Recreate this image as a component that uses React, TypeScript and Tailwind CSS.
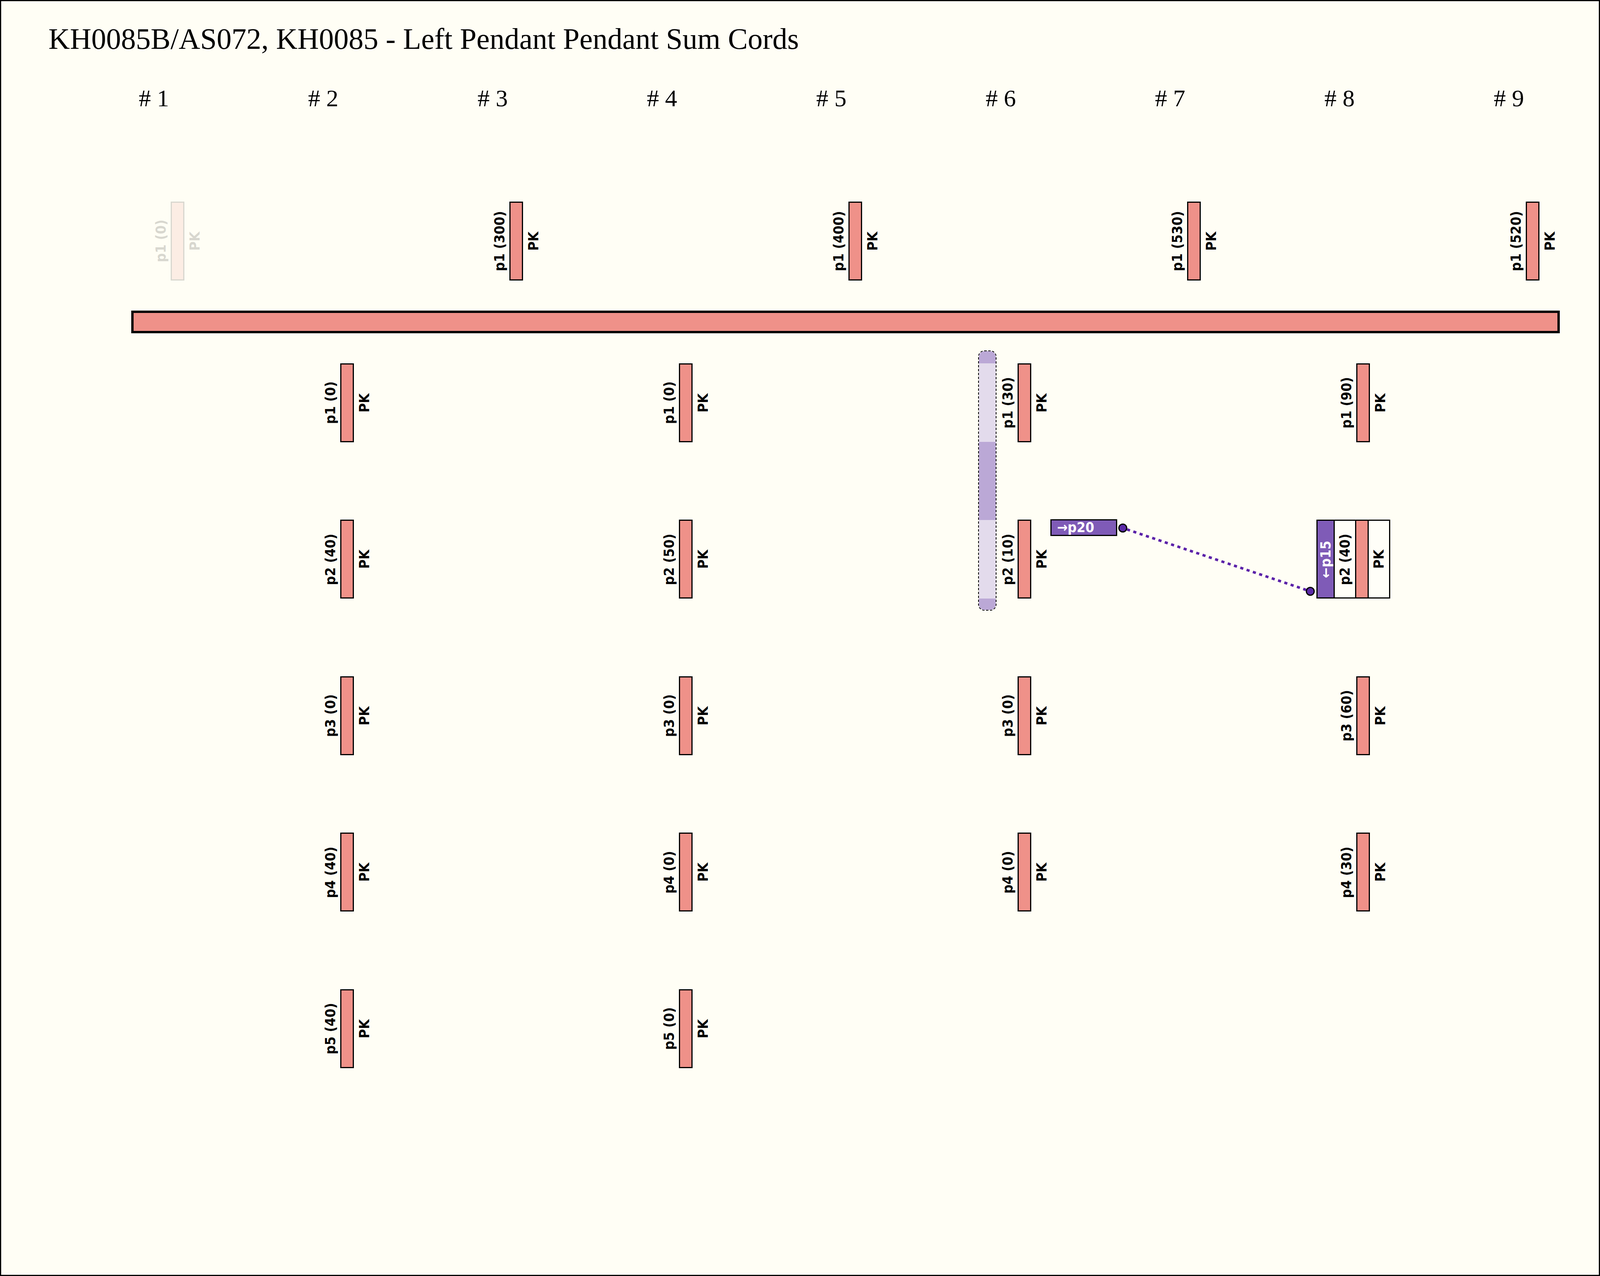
import React from 'react';

type TopPendant = { label: string; faded?: boolean } | null;

const topPendants: TopPendant[] = [
    { label: 'p1 (0)', faded: true },
    null,
    { label: 'p1 (300)' },
    null,
    { label: 'p1 (400)' },
    null,
    { label: 'p1 (530)' },
    null,
    { label: 'p1 (520)' },
];

const bottomPendants: string[][] = [
    [],
    ['p1 (0)', 'p2 (40)', 'p3 (0)', 'p4 (40)', 'p5 (40)'],
    [],
    ['p1 (0)', 'p2 (50)', 'p3 (0)', 'p4 (0)', 'p5 (0)'],
    [],
    ['p1 (30)', 'p2 (10)', 'p3 (0)', 'p4 (0)'],
    [],
    ['p1 (90)', 'p2 (40)', 'p3 (60)', 'p4 (30)'],
    [],
];

const labelFont = "font-['DejaVu_Sans_Condensed','DejaVu_Sans',sans-serif] font-bold text-[36px] leading-none";
const vertical = '[writing-mode:vertical-rl] rotate-180 whitespace-nowrap';

function Pendant({ label, faded }: { label: string; faded?: boolean }) {
    return (
        <div className={`flex h-[202px] items-center ${faded ? 'opacity-15' : ''}`}>
            <div className="flex w-[260px] justify-end">
                <span className={`${labelFont} ${vertical} mr-[7px] text-black`}>{label}</span>
            </div>
            <div className="h-[202px] w-[35px] border-[3px] border-black bg-[#ef9189]" />
            <span className={`${labelFont} ${vertical} ml-[9px] text-black`}>PK</span>
        </div>
    );
}

// pendant that carries a link marker (the ←p15 band) in front of its label
function LinkedPendant({ label }: { label: string }) {
    return (
        <div className="flex h-[202px] items-stretch">
            <div className="flex w-[260px] justify-end">
                <div className="flex w-[47px] items-center justify-center border-[3px] border-black bg-[#7f5bb7]">
                    <span className={`${labelFont} ${vertical} text-white`}>←p15</span>
                </div>
                <div className="flex w-[55px] items-center justify-center border-y-[3px] border-r-[3px] border-black bg-[#fffef8]">
                    <span className={`${labelFont} ${vertical} text-black`}>{label}</span>
                </div>
            </div>
            <div className="w-[32px] border-y-[3px] border-r-[3px] border-black bg-[#ef9189]" />
            <div className="flex w-[55px] items-center justify-center border-y-[3px] border-r-[3px] border-black bg-[#fffef8]">
                <span className={`${labelFont} ${vertical} text-black`}>PK</span>
            </div>
        </div>
    );
}

function GroupPill() {
    return (
        <div className="absolute left-[158.8px] top-[-33px] flex h-[666px] w-[47px] flex-col overflow-hidden rounded-[16px] border-2 border-dashed border-black">
            <div className="h-[31px] bg-[#bba8d6]" />
            <div className="h-[201px] bg-[#e3dbec]" />
            <div className="h-[200px] bg-[#bba8d6]" />
            <div className="h-[201px] bg-[#e3dbec]" />
            <div className="flex-1 bg-[#bba8d6]" />
        </div>
    );
}

function LinkLine() {
    return (
        <svg className="pointer-events-none absolute left-0 top-0 overflow-visible" width="3902" height="700">
            <line x1="2708.2" y1="425.2" x2="3166.4" y2="579.8" stroke="#5b22a9" strokeWidth="6.5" strokeDasharray="8 9" />
            <circle cx="2697.3" cy="421.5" r="10" fill="#5b2aa8" stroke="#000" strokeWidth="3" />
            <circle cx="3177.3" cy="583.5" r="10" fill="#5b2aa8" stroke="#000" strokeWidth="3" />
        </svg>
    );
}

export default function App() {
    return (
        <div className="h-[3266px] w-full overflow-hidden border-[3px] border-black bg-[#fffef5] text-black">
            <div className="mt-[58.4px] pl-[121px] font-['Liberation_Serif',serif] text-[76px] leading-none whitespace-nowrap">
                KH0085B/AS072, KH0085 - Left Pendant Pendant Sum Cords
            </div>

            <div className="ml-[174.2px] mt-[82.6px] grid grid-cols-[repeat(9,433.6px)]">
                {topPendants.map((_, i) => (
                    <div key={i} className="h-[62px] text-center font-['Liberation_Serif',serif] text-[62px] leading-none whitespace-nowrap">
                        # {i + 1}
                    </div>
                ))}
            </div>

            <div className="ml-[174.2px] mt-[234px] grid h-[202px] grid-cols-[repeat(9,433.6px)]">
                {topPendants.map((p, i) => (
                    <div key={i}>{p && <Pendant label={p.label} faded={p.faded} />}</div>
                ))}
            </div>

            <div className="ml-[333px] mt-[77px] h-[58px] w-[3657px] border-[6px] border-black bg-[#ef9189]" />

            <div className="relative ml-[174.2px] mt-[77px] grid grid-cols-[repeat(9,433.6px)]">
                {bottomPendants.map((col, i) => (
                    <div key={i} className="relative flex flex-col gap-[198.5px]">
                        {i === 5 && <GroupPill />}
                        {i === 5 && (
                            <div className="absolute left-[343.8px] top-[399px] z-10 flex h-[43px] w-[171px] items-center border-[3px] border-black bg-[#7f5bb7] pl-[14px]">
                                <span className={`${labelFont} whitespace-nowrap text-white`}>→p20</span>
                            </div>
                        )}
                        {col.map((label, j) =>
                            i === 7 && j === 1 ? (
                                <LinkedPendant key={j} label={label} />
                            ) : (
                                <Pendant key={j} label={label} />
                            ),
                        )}
                    </div>
                ))}
                <LinkLine />
            </div>
        </div>
    );
}
